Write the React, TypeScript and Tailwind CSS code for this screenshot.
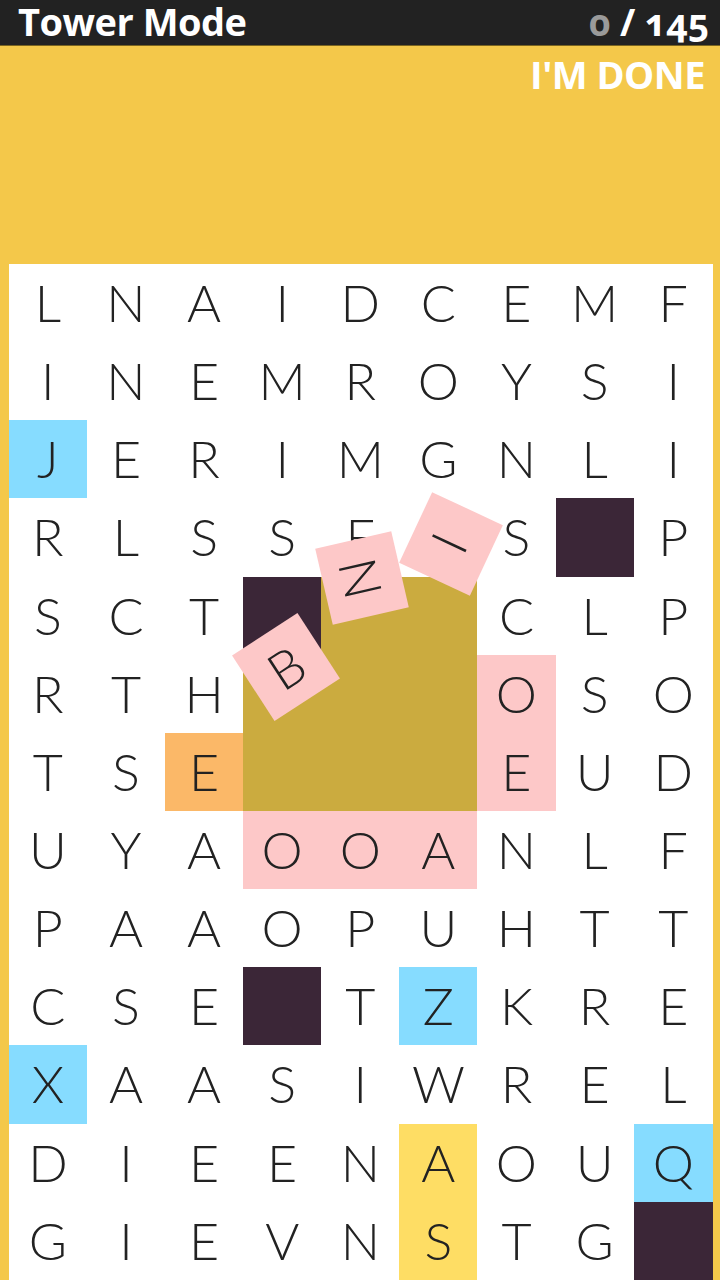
import React from 'react';

const rows = [
  'LNAIDCEMF',
  'INEMROYSI',
  'JERIMGNLI',
  'RLSSF S#P',
  'SCT#ggCLP',
  'RTHgggOSO',
  'TSEgggEUD',
  'UYAOOANLF',
  'PAAOPUHTT',
  'CSE#TZKRE',
  'XAASIWREL',
  'DIEENAOUQ',
  'GIEVNSTG#',
];

// special cells, keyed by row-col
const blue = ['2-0', '9-5', '10-0', '11-8'];
const pink = ['5-6', '6-6', '7-3', '7-4', '7-5'];
const yellow = ['11-5', '12-5'];

const cellClass = (r: number, c: number, ch: string) => {
  const key = `${r}-${c}`;
  if (ch === '#') return 'bg-[#3b2637]';
  if (ch === 'g') return 'bg-[#cbab3f]';
  if (blue.includes(key)) return 'bg-[#86dcff]';
  if (pink.includes(key)) return 'bg-[#fdc8c8]';
  if (yellow.includes(key)) return 'bg-[#fedd64]';
  if (key === '6-2') return 'bg-[#fbb868]';
  return 'bg-white';
};

const Tile: React.FC<{ letter: string; pos: string; tilt: string; spin: string }> = ({ letter, pos, tilt, spin }) => (
  <div className={`absolute w-[78px] h-[78px] bg-[#fdc8c8] flex items-center justify-center ${pos} ${tilt}`}>
    <span className={`block text-[52px] leading-none font-light text-[#222] ${spin}`}>{letter}</span>
  </div>
);

export default function App() {
  return (
    <div className="w-[720px] h-[1280px] overflow-hidden bg-[#f4c84a] font-['Lato',sans-serif]">
      <div className="h-[46px] bg-[#222222] border-b border-[#7a6420] flex items-center justify-between pl-[18px] pr-[11px] pb-[3px] font-['Open_Sans',sans-serif] font-bold text-white">
        <span className="text-[38px] leading-none tracking-[-0.5px]">Tower Mode</span>
        <span className="text-[37px] leading-none oldstyle-nums">
          <span className="text-[#9a9a9a]">0</span> / 145
        </span>
      </div>
      <div className="h-[218px] flex justify-end pr-[15px] pt-[8px]">
        <span className="font-['Open_Sans',sans-serif] font-bold text-white text-[38px] leading-[40px] tracking-[-0.5px]">I'M DONE</span>
      </div>
      <div className="relative ml-[8.85px] w-[704.15px]">
        <div className="grid grid-cols-[repeat(8,78.1px)_1fr] auto-rows-[78.15px]">
          {rows.map((row, r) =>
            row.split('').map((ch, c) => (
              <div
                key={`${r}-${c}`}
                className={`flex items-center justify-center pb-[2px] text-[52px] leading-none font-light text-[#222] ${cellClass(r, c, ch)}`}
              >
                {ch === '#' || ch === 'g' ? '' : ch}
              </div>
            )),
          )}
        </div>
        <Tile letter="B" pos="left-[238px] top-[364px]" tilt="rotate-[-33deg]" spin="" />
        <Tile letter="N" pos="left-[314px] top-[275px]" tilt="rotate-[-13deg]" spin="rotate-90" />
        <Tile letter="I" pos="left-[403px] top-[241px]" tilt="rotate-[25deg]" spin="rotate-90" />
      </div>
    </div>
  );
}
